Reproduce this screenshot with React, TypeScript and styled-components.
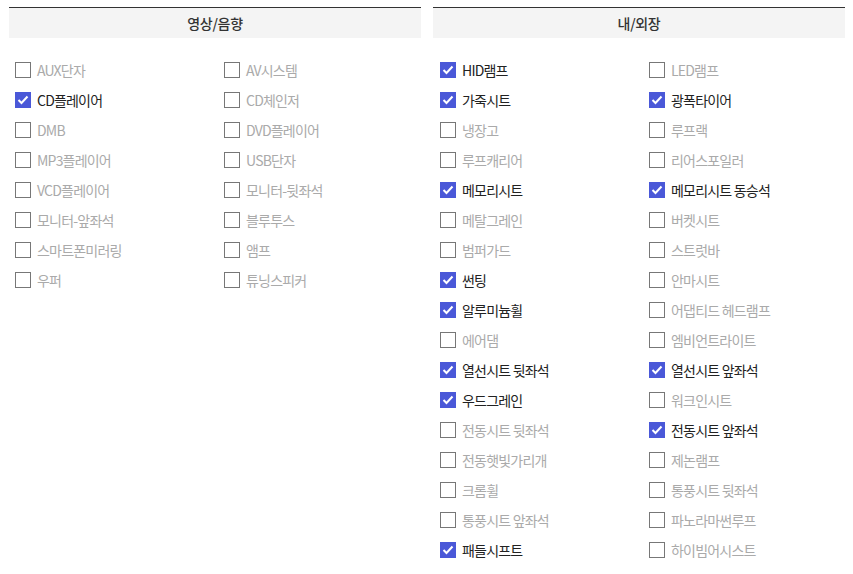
import styled, { createGlobalStyle } from "styled-components";

const GlobalStyle = createGlobalStyle`
  body {
    margin: 0;
    background: #fff;
    font-family: "Noto Sans CJK KR", "Noto Sans", sans-serif;
  }
`;

type Option = { label: string; checked?: boolean };

const media: Option[] = [
  { label: "AUX단자" },
  { label: "AV시스템" },
  { label: "CD플레이어", checked: true },
  { label: "CD체인저" },
  { label: "DMB" },
  { label: "DVD플레이어" },
  { label: "MP3플레이어" },
  { label: "USB단자" },
  { label: "VCD플레이어" },
  { label: "모니터-뒷좌석" },
  { label: "모니터-앞좌석" },
  { label: "블루투스" },
  { label: "스마트폰미러링" },
  { label: "앰프" },
  { label: "우퍼" },
  { label: "튜닝스피커" },
];

const interior: Option[] = [
  { label: "HID램프", checked: true },
  { label: "LED램프" },
  { label: "가죽시트", checked: true },
  { label: "광폭타이어", checked: true },
  { label: "냉장고" },
  { label: "루프랙" },
  { label: "루프캐리어" },
  { label: "리어스포일러" },
  { label: "메모리시트", checked: true },
  { label: "메모리시트 동승석", checked: true },
  { label: "메탈그레인" },
  { label: "버켓시트" },
  { label: "범퍼가드" },
  { label: "스트럿바" },
  { label: "썬팅", checked: true },
  { label: "안마시트" },
  { label: "알루미늄휠", checked: true },
  { label: "어댑티드 헤드램프" },
  { label: "에어댐" },
  { label: "엠비언트라이트" },
  { label: "열선시트 뒷좌석", checked: true },
  { label: "열선시트 앞좌석", checked: true },
  { label: "우드그레인", checked: true },
  { label: "워크인시트" },
  { label: "전동시트 뒷좌석" },
  { label: "전동시트 앞좌석", checked: true },
  { label: "전동햇빛가리개" },
  { label: "제논램프" },
  { label: "크롬휠" },
  { label: "통풍시트 뒷좌석" },
  { label: "통풍시트 앞좌석" },
  { label: "파노라마썬루프" },
  { label: "패들시프트", checked: true },
  { label: "하이빔어시스트" },
];

function Checkbox({ checked }: { checked?: boolean }) {
  return (
    <Box $checked={checked}>
      {checked && (
        <svg width="12" height="10" viewBox="0 0 12 10">
          <polyline
            points="1.5,5 4.5,8 10.5,1.5"
            fill="none"
            stroke="#fff"
            strokeWidth="2"
          />
        </svg>
      )}
    </Box>
  );
}

function Panel({ title, options, inset }: { title: string; options: Option[]; inset: number }) {
  return (
    <Section>
      <Header>{title}</Header>
      <List $inset={inset}>
        {options.map((o) => (
          <Item key={o.label} $checked={o.checked}>
            <Checkbox checked={o.checked} />
            <span>{o.label}</span>
          </Item>
        ))}
      </List>
    </Section>
  );
}

export default function App() {
  return (
    <>
      <GlobalStyle />
      <Page>
        <Panel title="영상/음향" options={media} inset={6} />
        <Panel title="내/외장" options={interior} inset={7} />
      </Page>
    </>
  );
}

const Page = styled.div`
  display: flex;
  gap: 12px;
  padding: 7px 8px 0 9px;
`;

const Section = styled.div`
  flex: 1;
`;

const Header = styled.div`
  border-top: 1px solid #333;
  background: #f4f4f4;
  height: 30px;
  display: flex;
  align-items: center;
  justify-content: center;
  font-size: 14px;
  font-weight: 500;
  color: #333;
  letter-spacing: -0.3px;
`;

const List = styled.ul<{ $inset: number }>`
  list-style: none;
  margin: 0;
  padding: 24px 0 0 ${(p) => p.$inset}px;
  display: grid;
  grid-template-columns: 209px 1fr;
  grid-auto-rows: 30px;
`;

const Item = styled.li<{ $checked?: boolean }>`
  display: flex;
  align-items: flex-start;
  gap: 6px;
  height: 30px;
  font-size: 14px;
  line-height: 16px;
  letter-spacing: -0.8px;
  color: ${(p) => (p.$checked ? "#222" : "#aaa")};
`;

const Box = styled.span<{ $checked?: boolean }>`
  flex: none;
  box-sizing: border-box;
  width: 16px;
  height: 16px;
  display: flex;
  align-items: center;
  justify-content: center;
  border: 1px solid ${(p) => (p.$checked ? "#4a58d8" : "#777")};
  background: ${(p) => (p.$checked ? "#4a58d8" : "#fff")};
`;
